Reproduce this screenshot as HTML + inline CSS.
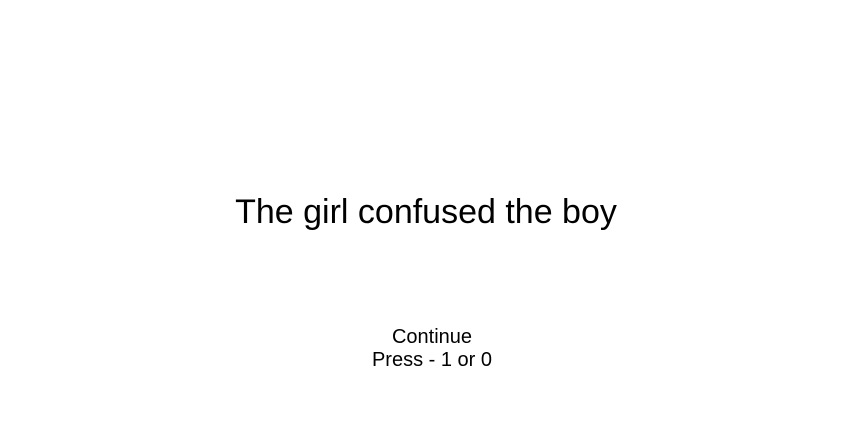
<!DOCTYPE html>
<html><head><style>
html,body{margin:0;padding:0;width:864px;height:432px;background:#fff;overflow:hidden;font-family:"Liberation Sans",Arial,sans-serif;color:#000}
.t{position:absolute;left:0;width:864px;text-align:center;white-space:nowrap}
</style></head><body>
<div class="t" style="top:192px;font-size:34px;line-height:40px;left:-6px">The girl confused the boy</div>
<div class="t" style="top:326px;font-size:20px;line-height:23px">Continue<br>Press - 1 or 0</div>
</body></html>
